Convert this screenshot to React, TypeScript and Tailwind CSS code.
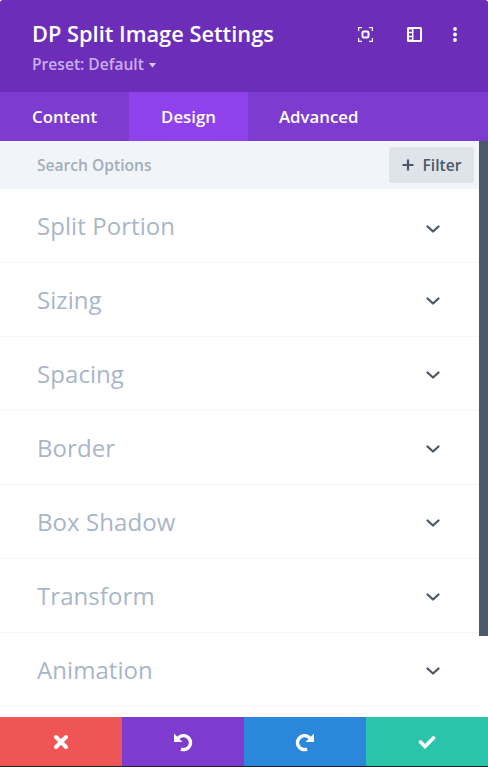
import React from "react";

const rows = ["Split Portion", "Sizing", "Spacing", "Border", "Box Shadow", "Transform", "Animation"];

function Chevron({ first }: { first: boolean }) {
  return (
    <svg width="16" height="10" viewBox="0 0 16 10" fill="none" className={first ? "block mt-[6px]" : "block mt-[2px]"}>
      <path d="M2.500 2.500L8 7.500l5.500-5" stroke="#4c5866" strokeWidth="2.300" strokeLinecap="round" strokeLinejoin="round" />
    </svg>
  );
}

export default function App() {
  return (
    <div className="flex h-[767px] w-[488px] flex-col overflow-hidden rounded-t-[3px] bg-white font-['Open_Sans',sans-serif]">
      <header className="flex h-[92px] shrink-0 items-start justify-between bg-[#6c2eb9] pl-[32px] pr-[31px]">
        <div>
          <h1 className="mt-[19px] text-[21.8px] leading-[30px] font-semibold text-white">DP Split Image Settings</h1>
          <div className="mt-[6px] flex items-center text-[15.6px] leading-[19px] font-semibold text-[#c9afee]">
            Preset: Default
            <svg width="7" height="5" viewBox="0 0 7 5" className="ml-[5px] mt-[1px]">
              <path d="M0 0h7L3.500 4.500z" fill="#d9c8f3" />
            </svg>
          </div>
        </div>
        <div className="mt-[27px] flex items-center">
          <svg width="15" height="15" viewBox="0 0 15 15" fill="none" stroke="#fff" strokeWidth="1.200">
            <path d="M.6 4V.6h3.400M11 .6h3.400V4M14.400 11v3.400H11M4 14.400H.6V11" />
            <rect x="4.500" y="4.500" width="6" height="6" rx="1.200" strokeWidth="2" />
          </svg>
          <svg width="15" height="15" viewBox="0 0 15 15" className="ml-[34px]">
            <path fillRule="evenodd" fill="#fff" d="M1.500 0h12A1.500 1.500 0 0 1 15 1.500v12a1.500 1.500 0 0 1-1.500 1.500h-12A1.500 1.500 0 0 1 0 13.500v-12A1.500 1.500 0 0 1 1.500 0zM6.500 2v11h6.500V2zM2 2.500v2.300h3V2.500zM2 6.300v2.400h3V6.300zM2 10.200v2.300h3v-2.300z" />
          </svg>
          <svg width="4" height="15" viewBox="0 0 4 15" fill="#fff" className="ml-[31px]">
            <circle cx="2" cy="2" r="1.900" />
            <circle cx="2" cy="7.500" r="1.900" />
            <circle cx="2" cy="13" r="1.900" />
          </svg>
        </div>
      </header>

      <nav className="flex h-[49px] shrink-0 bg-[#7d3bcf] text-[16.8px] font-semibold text-white">
        <div className="flex w-[129px] items-center pl-[32px]">Content</div>
        <div className="flex w-[119px] items-center justify-center bg-[#8f42ec]">Design</div>
        <div className="flex items-center pl-[31px]">Advanced</div>
      </nav>

      <div className="flex min-h-0 flex-1">
        <div className="w-[479px] shrink-0">
          <div className="flex h-[48px] items-center justify-between bg-[#f1f5f9] pl-[37px] pr-[5px]">
            <span className="pt-[2px] text-[15.6px] font-semibold text-[#a3aebb]">Search Options</span>
            <div className="flex h-[36px] w-[85px] items-center justify-center rounded-[3px] bg-[#dfe4eb] text-[15.6px] font-semibold text-[#4c5866]">
              <svg width="12" height="12" viewBox="0 0 12 12" className="mr-[9px]">
                <path d="M6 .5v11M.5 6h11" stroke="#4c5866" strokeWidth="2.200" />
              </svg>
              <span className="pt-[2px]">Filter</span>
            </div>
          </div>
          {rows.map((r, i) => (
            <div key={r} className="flex h-[74px] items-center justify-between border-b border-[#f5f6fb] pl-[37px] pr-[38px]">
              <span className="text-[24px] tracking-[0.07px] text-[#a9b6c8]">{r}</span>
              <Chevron first={i === 0} />
            </div>
          ))}
        </div>
        <div className="flex-1">
          <div className="h-[495px] bg-[#4c5a68]" />
        </div>
      </div>

      <footer className="flex h-[50px] shrink-0 border-b border-[#1d2030]">
        <div className="flex w-[122px] items-center justify-center bg-[#ef5555]">
          <svg width="16" height="16" viewBox="0 0 16 16">
            <path d="M3 3l10 10M13 3L3 13" stroke="#fff" strokeWidth="4" strokeLinecap="round" />
          </svg>
        </div>
        <div className="flex w-[122px] items-center justify-center bg-[#7d3bcf]">
          <svg width="20" height="20" viewBox="0 0 20 20" fill="none">
            <path d="M4.500 7A7 7 0 1 1 8 17.200" stroke="#fff" strokeWidth="3.400" />
            <path d="M1 1.500v8.500h8.500z" fill="#fff" />
          </svg>
        </div>
        <div className="flex w-[122px] items-center justify-center bg-[#2b87da]">
          <svg width="20" height="20" viewBox="0 0 20 20" fill="none">
            <path d="M15.500 7A7 7 0 1 0 12 17.200" stroke="#fff" strokeWidth="3.400" />
            <path d="M19 1.500v8.500h-8.500z" fill="#fff" />
          </svg>
        </div>
        <div className="flex w-[122px] items-center justify-center bg-[#29c4a9]">
          <svg width="18" height="14" viewBox="0 0 18 14" fill="none">
            <path d="M2.500 7l4.500 4.500L15.500 3" stroke="#fff" strokeWidth="3.600" strokeLinecap="round" />
          </svg>
        </div>
      </footer>
    </div>
  );
}
